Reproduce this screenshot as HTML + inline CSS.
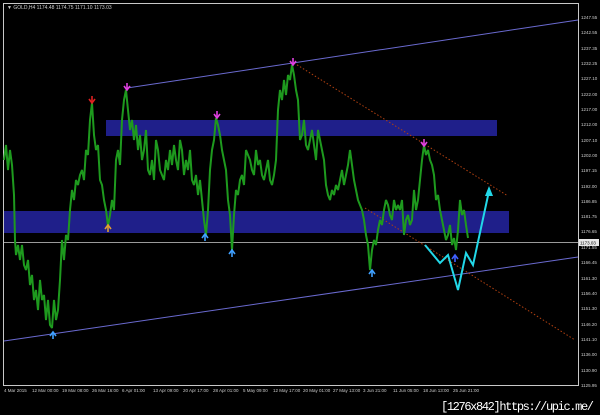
<!DOCTYPE html>
<html><head><style>
html,body{margin:0;padding:0;background:#000;width:600px;height:415px;overflow:hidden}
svg{display:block}
text{font-family:"Liberation Sans",sans-serif;fill:#ccc}
</style></head><body>
<svg width="600" height="415" xmlns="http://www.w3.org/2000/svg">
<defs>
<g id="dn"><line x1="0" y1="-5" x2="0" y2="1" stroke-width="1.6"/><path d="M-3,-2 L0,2 L3,-2" fill="none" stroke-width="1.6"/></g>
<g id="up"><line x1="0" y1="5" x2="0" y2="-1" stroke-width="1.6"/><path d="M-3,2 L0,-2 L3,2" fill="none" stroke-width="1.6"/></g>
</defs>
<rect width="600" height="415" fill="#000"/>
<rect x="3.5" y="3.5" width="575" height="382" fill="none" stroke="#c8c8c8" stroke-width="1"/>
<text x="7" y="9" font-size="5">▼ GOLD,H4  1174.48 1174.75 1171.10 1173.03</text>
<rect x="106" y="120" width="391" height="16" fill="#1f1f8a"/>
<rect x="4" y="211" width="505" height="22" fill="#1f1f8a"/>
<line x1="4" y1="242.5" x2="578" y2="242.5" stroke="#9a9a9a" stroke-width="1"/>
<line x1="127" y1="88" x2="578" y2="20" stroke="#6a6ad0" stroke-width="1"/>
<line x1="4" y1="341" x2="578" y2="257" stroke="#6a6ad0" stroke-width="1"/>
<line x1="294" y1="63" x2="508" y2="196" stroke="#b04010" stroke-width="1" stroke-dasharray="1.5,2"/>
<line x1="365" y1="208" x2="575" y2="340" stroke="#b04010" stroke-width="1" stroke-dasharray="1.5,2"/>
<polyline fill="none" stroke="#1e9a1e" stroke-width="2" stroke-linejoin="bevel" points="
4,160 6,145 8,170 10,150 12,165 14,195 15,240 16,255 18,245 20,260 22,245 24,265 26,270 28,260 30,285 32,275 34,300 36,290 38,310 40,280 42,300 44,295 46,320 48,300 50,325 52,328 54,300 56,320 58,310 60,280 62,240 64,260 66,235 68,240 70,210 72,190 74,200 76,180 78,185 80,175 82,170 84,180 86,150 88,155 90,120 92,103 94,135 96,150 98,145 100,180 102,185 104,200 106,210 108,226 110,215 112,200 114,210 116,160 118,150 120,165 122,120 124,100 126,90 128,110 130,130 132,120 134,140 136,125 138,150 140,135 142,160 144,150 146,130 148,170 150,175 152,160 154,180 156,140 158,150 160,170 162,175 164,180 166,160 168,170 170,150 172,165 174,145 176,160 178,170 180,140 182,150 184,175 186,160 188,170 190,150 192,180 194,185 196,175 198,195 200,180 202,200 204,220 206,235 208,210 210,170 212,150 214,140 216,118 218,125 220,135 222,150 224,160 226,170 228,200 230,215 232,250 234,215 236,190 238,195 240,180 242,175 244,185 246,150 248,155 250,160 252,170 254,175 256,150 258,165 260,160 262,175 264,180 266,170 268,160 270,180 272,185 274,175 276,160 278,110 280,90 282,100 284,80 286,95 288,75 290,80 292,65 294,75 296,90 298,100 300,140 302,135 304,120 306,145 308,150 310,140 312,130 314,145 316,160 318,130 320,140 322,150 324,160 326,185 328,195 330,200 332,190 334,195 336,185 338,190 340,180 342,170 344,185 346,175 348,165 350,150 352,165 354,180 356,190 358,200 360,205 362,210 364,220 366,235 368,245 370,270 372,250 374,240 376,245 378,230 380,220 382,225 384,210 386,200 388,205 390,215 392,220 394,200 396,210 398,205 400,210 402,200 404,235 406,220 408,215 410,225 412,220 414,190 416,210 418,200 420,180 422,160 424,145 426,155 428,150 430,160 432,165 434,175 436,200 438,195 440,210 442,220 444,230 446,240 448,235 450,225 452,245 454,238 456,250 458,230 460,200 462,215 464,210 466,225 468,238"/>
<polyline fill="none" stroke="#22d8e8" stroke-width="2" points="425,245 440,263 448,255 458,290 466,253 473,265 489,191"/>
<polygon points="489,186 485,196 493,196" fill="#22d8e8"/>
<use href="#dn" x="92" y="101" stroke="#e02020"/>
<use href="#dn" x="127" y="88" stroke="#e040e0"/>
<use href="#dn" x="217" y="116" stroke="#e040e0"/>
<use href="#dn" x="293" y="63" stroke="#e040e0"/>
<use href="#dn" x="424" y="144" stroke="#e040e0"/>
<use href="#up" x="108" y="227" stroke="#e0a030"/>
<use href="#up" x="53" y="334" stroke="#40a0ff"/>
<use href="#up" x="205" y="236" stroke="#40a0ff"/>
<use href="#up" x="232" y="252" stroke="#40a0ff"/>
<use href="#up" x="372" y="272" stroke="#40a0ff"/>
<use href="#up" x="455" y="257" stroke="#4060ff"/>
<g font-size="4.5">
<text x="581" y="19">1247.55</text><text x="581" y="34">1242.55</text><text x="581" y="50">1237.35</text><text x="581" y="65">1232.25</text><text x="581" y="80">1227.10</text><text x="581" y="96">1222.00</text><text x="581" y="111">1217.00</text><text x="581" y="126">1212.00</text><text x="581" y="142">1207.10</text><text x="581" y="157">1202.00</text><text x="581" y="172">1197.15</text><text x="581" y="188">1192.00</text><text x="581" y="203">1186.85</text><text x="581" y="218">1181.75</text><text x="581" y="233">1176.65</text><text x="581" y="249">1171.55</text><text x="581" y="264">1166.45</text><text x="581" y="280">1161.30</text><text x="581" y="295">1156.40</text><text x="581" y="310">1151.30</text><text x="581" y="326">1146.20</text><text x="581" y="341">1141.10</text><text x="581" y="356">1136.00</text><text x="581" y="372">1130.90</text><text x="581" y="387">1125.95</text>
</g>
<rect x="579" y="239" width="20" height="7" fill="#e8e8e8"/>
<text x="580" y="244.5" font-size="4.5" style="fill:#000">1173.03</text>
<g font-size="4.5">
<text x="4" y="392">4 Mar 2015</text><text x="32" y="392">12 Mar 00:00</text><text x="62" y="392">19 Mar 08:00</text><text x="92" y="392">26 Mar 16:00</text><text x="122" y="392">6 Apr 01:00</text><text x="153" y="392">13 Apr 09:00</text><text x="183" y="392">20 Apr 17:00</text><text x="213" y="392">28 Apr 01:00</text><text x="243" y="392">5 May 09:00</text><text x="273" y="392">12 May 17:00</text><text x="303" y="392">20 May 01:00</text><text x="333" y="392">27 May 13:00</text><text x="363" y="392">3 Jun 21:00</text><text x="393" y="392">11 Jun 05:00</text><text x="423" y="392">18 Jun 13:00</text><text x="453" y="392">25 Jun 21:00</text>
</g>
<text x="441" y="410" font-size="12" textLength="153" style="fill:#fff;font-family:'Liberation Mono',monospace">[1276x842]https://upic.me/</text>
</svg>
</body></html>
